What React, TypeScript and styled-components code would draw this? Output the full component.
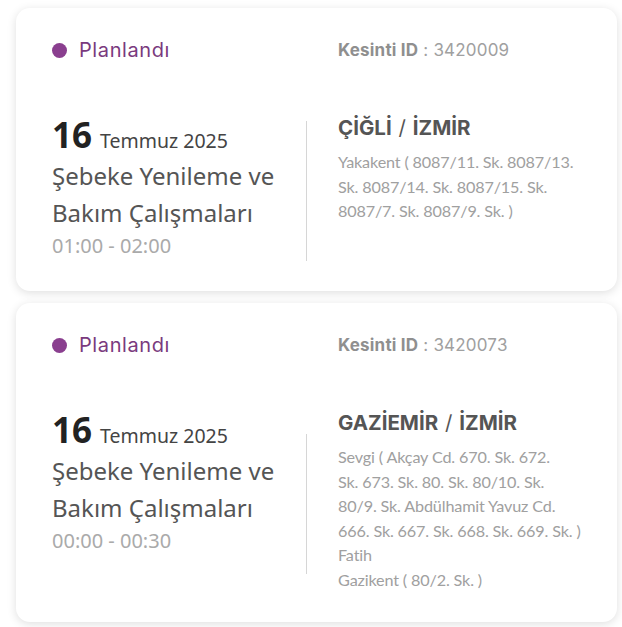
import React from "react";
import styled, {createGlobalStyle} from "styled-components";

const GlobalStyle = createGlobalStyle`
  body {
    margin: 0;
    background: #ffffff;
    font-family: "Noto Sans", sans-serif;
  }
`;

const List = styled.div`
  display: flex;
  flex-direction: column;
  gap: 12px;
  padding: 8px 5px 6px 16px;
`;

const Card = styled.div`
  background: #ffffff;
  border-radius: 14px;
  box-shadow: 0 2px 10px rgba(0, 0, 0, 0.13);
  padding: 30px 36px 30px 36px;
`;

const TopRow = styled.div`
  display: grid;
  grid-template-columns: 286px 1fr;
  align-items: center;
`;

const Status = styled.div`
  display: flex;
  align-items: center;
  gap: 12px;
  font-family: "Inter", sans-serif;
  font-size: 20px;
  letter-spacing: 0.6px;
  color: #7a3a7e;
`;

const Dot = styled.span`
  width: 15px;
  height: 15px;
  border-radius: 50%;
  background: #8a3f8f;
`;

const OutageId = styled.div`
  font-family: "Inter", sans-serif;
  font-size: 17px;
  letter-spacing: 0.2px;
  color: #a0a0a0;

  b {
    font-weight: 700;
    color: #8f8f8f;
  }
`;

const Body = styled.div`
  display: grid;
  grid-template-columns: 254px 1px 1fr;
  margin-top: 58px;
`;

const Left = styled.div`
  display: flex;
  flex-direction: column;
`;

const DateLine = styled.div`
  display: flex;
  align-items: baseline;
  gap: 8px;
  margin: -3px 0 3px;
`;

const Day = styled.span`
  font-size: 35px;
  font-weight: 700;
  color: #222;
  line-height: 36px;
`;

const Month = styled.span`
  font-size: 19.5px;
  color: #444;
`;

const Title = styled.div`
  font-size: 24px;
  line-height: 37px;
  color: #555;
`;

const Time = styled.div`
  font-size: 20px;
  line-height: 30px;
  color: #aaa;
`;

const Divider = styled.div`
  align-self: center;
  height: 140px;
  background: #d6d6d6;
`;

const Right = styled.div`
  display: flex;
  flex-direction: column;
  padding-left: 31px;
  font-family: "Inter", sans-serif;
`;

const Place = styled.div`
  font-size: 20.5px;
  font-weight: 700;
  color: #555;
  line-height: 16px;
  margin-bottom: 14px;

  span {
    font-weight: 400;
    margin: 0 2px;
  }
`;

const Address = styled.div`
  font-family: "Lato", sans-serif;
  font-size: 16.2px;
  letter-spacing: -0.15px;
  line-height: 24.5px;
  color: #a0a0a0;
  white-space: pre;
`;

type Outage = {
    id: string;
    time: string;
    district: string;
    addresses: string[];
};

// line breaks kept as shown on the site
const outages: Outage[] = [
    {
        id: "3420009",
        time: "01:00 - 02:00",
        district: "ÇİĞLİ",
        addresses: ["Yakakent ( 8087/11. Sk. 8087/13.\nSk. 8087/14. Sk. 8087/15. Sk.\n8087/7. Sk. 8087/9. Sk. )"],
    },
    {
        id: "3420073",
        time: "00:00 - 00:30",
        district: "GAZİEMİR",
        addresses: [
            "Sevgi ( Akçay Cd. 670. Sk. 672.\nSk. 673. Sk. 80. Sk. 80/10. Sk.\n80/9. Sk. Abdülhamit Yavuz Cd.\n666. Sk. 667. Sk. 668. Sk. 669. Sk. )",
            "Fatih",
            "Gazikent ( 80/2. Sk. )",
        ],
    },
];

const OutageCard = ({outage}: {outage: Outage}) => (
    <Card>
        <TopRow>
            <Status><Dot/>Planlandı</Status>
            <OutageId><b>Kesinti ID</b> : {outage.id}</OutageId>
        </TopRow>
        <Body>
            <Left>
                <DateLine><Day>16</Day><Month>Temmuz 2025</Month></DateLine>
                <Title>Şebeke Yenileme ve Bakım Çalışmaları</Title>
                <Time>{outage.time}</Time>
            </Left>
            <Divider/>
            <Right>
                <Place>{outage.district} <span>/</span> İZMİR</Place>
                {outage.addresses.map((a) => <Address key={a}>{a}</Address>)}
            </Right>
        </Body>
    </Card>
);

const App = () => (
    <>
        <GlobalStyle/>
        <List>
            {outages.map((o) => <OutageCard key={o.id} outage={o}/>)}
        </List>
    </>
);

export default App;
